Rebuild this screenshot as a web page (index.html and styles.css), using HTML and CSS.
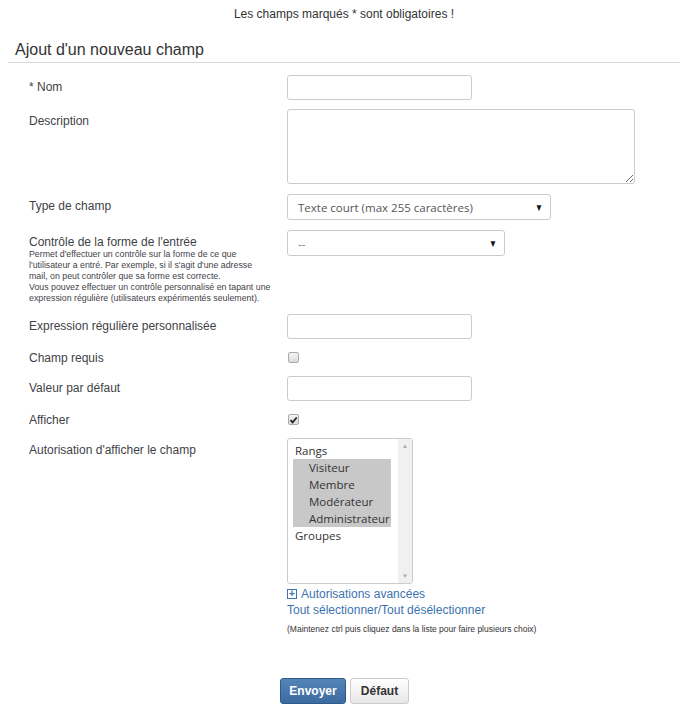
FILE: index.html
```html
<!DOCTYPE html>
<html lang="fr">
<head>
<meta charset="utf-8">
<title>Ajout d'un nouveau champ</title>
<link rel="stylesheet" href="styles.css">
</head>
<body>
<p class="notice">Les champs marqués * sont obligatoires !</p>
<h2 class="title">Ajout d'un nouveau champ</h2>
<form class="form">
  <div class="row row-first">
    <label class="label">* Nom</label>
    <div class="field"><input class="input" type="text"></div>
  </div>
  <div class="row">
    <label class="label">Description</label>
    <div class="field"><textarea class="textarea"></textarea></div>
  </div>
  <div class="row row-type">
    <label class="label">Type de champ</label>
    <div class="field"><div class="select select-wide"><span>Texte court (max 255 caractères)</span><span class="caret">▼</span></div></div>
  </div>
  <div class="row">
    <div class="label">
      <div>Contrôle de la forme de l'entrée</div>
      <div class="help">Permet d'effectuer un contrôle sur la forme de ce que<br>l'utilisateur a entré. Par exemple, si il s'agit d'une adresse<br>mail, on peut contrôler que sa forme est correcte.<br>Vous pouvez effectuer un contrôle personnalisé en tapant une<br>expression régulière (utilisateurs expérimentés seulement).</div>
    </div>
    <div class="field"><div class="select select-mid"><span class="dash">--</span><span class="caret">▼</span></div></div>
  </div>
  <div class="row">
    <label class="label">Expression régulière personnalisée</label>
    <div class="field"><input class="input" type="text"></div>
  </div>
  <div class="row row-check">
    <label class="label">Champ requis</label>
    <div class="field"><span class="check"></span></div>
  </div>
  <div class="row">
    <label class="label">Valeur par défaut</label>
    <div class="field"><input class="input" type="text"></div>
  </div>
  <div class="row row-check">
    <label class="label">Afficher</label>
    <div class="field"><span class="check checked"><svg viewBox="0 0 10 10" width="10" height="10"><path d="M1.6 5.2 L4 7.6 L8.6 2.2" fill="none" stroke="#222" stroke-width="2"/></svg></span></div>
  </div>
  <div class="row">
    <label class="label">Autorisation d'afficher le champ</label>
    <div class="field">
      <div class="listbox">
        <div class="list">
          <div class="group">Rangs</div>
          <div class="opts">
            <div class="opt">Visiteur</div>
            <div class="opt">Membre</div>
            <div class="opt">Modérateur</div>
            <div class="opt">Administrateur</div>
          </div>
          <div class="group">Groupes</div>
        </div>
        <div class="scrollbar"><span class="arrow">▲</span><span class="arrow">▼</span></div>
      </div>
      <a class="link adv"><span class="plus">+</span>Autorisations avancées</a>
      <a class="link all">Tout sélectionner/Tout désélectionner</a>
      <div class="hint">(Maintenez ctrl puis cliquez dans la liste pour faire plusieurs choix)</div>
    </div>
  </div>
  <div class="buttons">
    <button type="button" class="btn btn-primary">Envoyer</button>
    <button type="button" class="btn btn-default">Défaut</button>
  </div>
</form>
</body>
</html>
```
FILE: styles.css
```css
html, body { margin: 0; padding: 0; background: #fff; }
body {
  font-family: "Liberation Sans", Arial, sans-serif;
  font-size: 12px;
  color: #3f3f48;
  padding: 0 12px 0 8px;
}
.notice {
  margin: 0;
  padding-top: 7px;
  text-align: center;
  line-height: 14px;
  color: #333;
}
.title {
  margin: 18px 0 0;
  padding: 0 0 1px 7px;
  font-size: 16px;
  font-weight: normal;
  line-height: 22px;
  color: #333;
  border-bottom: 1px solid #d9d9d9;
}
.form { padding: 12px 0 0 21px; }
.row {
  display: grid;
  grid-template-columns: 258px 1fr;
  margin-bottom: 10px;
}
.row-first { margin-bottom: 9px; }
.row-type { margin-top: 3px; }
.label {
  padding-top: 5px;
  line-height: 14px;
}
.help {
  font-size: 8.8px;
  line-height: 11px;
  white-space: nowrap;
}
.field { display: flex; flex-direction: column; align-items: flex-start; }
.input {
  box-sizing: border-box;
  width: 185px;
  height: 25px;
  border: 1px solid #ccc;
  border-radius: 3px;
  margin: 0;
  background: #fff;
}
.textarea {
  box-sizing: border-box;
  width: 348px;
  height: 75px;
  border: 1px solid #ccc;
  border-radius: 3px;
  margin: 0;
  display: block;
}
.select {
  box-sizing: border-box;
  height: 26px;
  border: 1px solid #ccc;
  border-radius: 3px;
  display: flex;
  align-items: center;
  justify-content: space-between;
  padding: 0 6px 0 10px;
  font-family: "Open Sans", sans-serif;
  font-size: 11.5px;
  color: #555;
}
.select-wide { width: 264px; }
.select-mid { width: 218px; }
.caret { font-size: 10px; color: #111; transform: scaleX(0.8); }
.dash { color: #777; }
.row-check .label { padding-top: 2px; }
.row-check { min-height: 17px; }
.check {
  box-sizing: border-box;
  display: flex;
  align-items: center;
  justify-content: center;
  width: 11px;
  height: 11px;
  margin: 3px 0 0 1px;
  border: 1px solid #aaa;
  border-radius: 2px;
  background: linear-gradient(#f4f4f4, #dcdcdc);
}
.check svg { display: block; }
.listbox {
  box-sizing: border-box;
  width: 126px;
  height: 146px;
  border: 1px solid #ccc;
  border-radius: 3px;
  display: flex;
  overflow: hidden;
}
.list {
  flex: 1;
  padding: 3px 0 0 5px;
  font-family: "Open Sans", sans-serif;
  font-size: 11.5px;
  line-height: 17px;
  color: #333;
}
.opts { background: #c8c8c8; width: 98px; }
.opt { padding-left: 16px; }
.group { padding-left: 2px; }
.scrollbar {
  width: 14px;
  background: #f0f0f0;
  display: flex;
  flex-direction: column;
  justify-content: space-between;
  align-items: center;
  padding: 3px 0;
}
.arrow { font-size: 6px; color: #aaa; line-height: 8px; }
.link {
  color: #3b73b0;
  text-decoration: none;
  line-height: 16px;
}
.adv { display: flex; align-items: center; margin-top: 2px; }
.plus {
  box-sizing: border-box;
  width: 10px;
  height: 10px;
  border: 1px solid #3b73b0;
  font-size: 10px;
  line-height: 7px;
  text-align: center;
  margin-right: 4px;
  font-weight: bold;
}
.all { margin-top: 0; }
.hint {
  font-size: 8.5px;
  margin-top: 6px;
  color: #333;
}
.buttons {
  display: flex;
  justify-content: center;
  gap: 4px;
  margin: 44px 0 0 -20px;
}
.btn {
  height: 26px;
  padding: 0 8px;
  border-radius: 3px;
  font-family: "Liberation Sans", Arial, sans-serif;
  font-size: 12px;
  font-weight: bold;
}
.btn-primary {
  width: 66px;
  color: #fff;
  border: 1px solid #2d5b8c;
  background: linear-gradient(#5584b8, #3b6ba1);
}
.btn-default {
  width: 59px;
  color: #333;
  border: 1px solid #ccc;
  background: linear-gradient(#fff, #e6e6e6);
}
```
